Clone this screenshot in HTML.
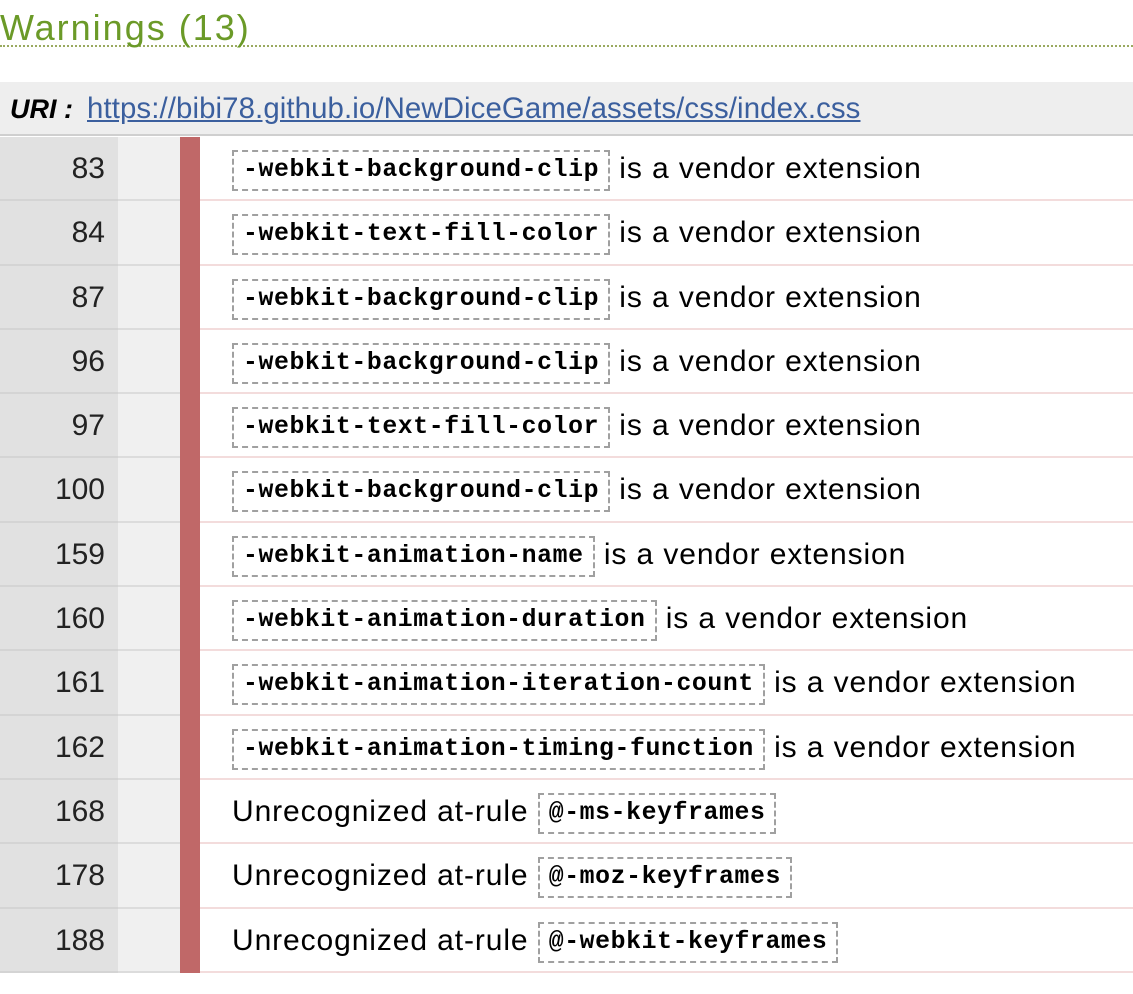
<!DOCTYPE html>
<html><head><meta charset="utf-8"><style>
body{margin:0;background:#fff;font-family:"Liberation Sans",Arial,sans-serif;width:1133px;height:994px;overflow:hidden;position:relative}
h2{position:absolute;left:0;top:0;margin:0;width:1133px;height:45px;border-bottom:2px dotted #9aaa60;color:#6b9a28;font-weight:normal;font-size:36px;letter-spacing:2px;line-height:58px;white-space:nowrap}
h2 span{position:relative;top:-1px}
.uri{position:absolute;left:0;top:82px;width:1133px;height:54px;background:#eeeeee;border-bottom:2px solid #cfcfcf;font-size:29.4px;line-height:54px;padding-left:10px;box-sizing:border-box;white-space:nowrap}
.uri b{font-style:italic;font-weight:900;margin-right:14px;font-size:27px}
.uri a{color:#3b5f9e;text-decoration:underline;letter-spacing:0.1px}
.rows{position:absolute;left:0;top:137px;width:1133px}
.row{position:relative;height:64.3px;box-sizing:border-box}
.n{position:absolute;left:0;top:0;width:118px;height:100%;background:#e1e1e1;border-bottom:2px solid #d4d4d4;box-sizing:border-box;text-align:right;padding-right:13px;font-size:30px;line-height:64px;color:#222}
.g{position:absolute;left:118px;top:0;width:62px;height:100%;background:#f0f0f0;border-bottom:2px solid #dcdcdc;box-sizing:border-box}
.r{position:absolute;left:180px;top:0;width:20px;height:100%;background:#c06868}
.c{position:absolute;left:200px;top:0;right:0;height:100%;border-bottom:2px solid #f3dcdc;box-sizing:border-box;padding-left:32px;font-size:30px;letter-spacing:0.9px;line-height:64px;white-space:nowrap;color:#000}
code{display:inline-block;font-family:"Liberation Mono","Courier New",monospace;font-weight:bold;font-size:24.8px;line-height:37px;border:2px dashed #a0a0a0;padding:0 9px;vertical-align:2px;letter-spacing:0.6px}
</style></head><body>
<h2><span>Warnings (13)</span></h2>
<div class="uri"><b>URI :</b><a>https://bibi78.github.io/NewDiceGame/assets/css/index.css</a></div>
<div class="rows">
<div class="row"><div class="n">83</div><div class="g"></div><div class="r"></div><div class="c"><code>-webkit-background-clip</code> is a vendor extension</div></div>
<div class="row"><div class="n">84</div><div class="g"></div><div class="r"></div><div class="c"><code>-webkit-text-fill-color</code> is a vendor extension</div></div>
<div class="row"><div class="n">87</div><div class="g"></div><div class="r"></div><div class="c"><code>-webkit-background-clip</code> is a vendor extension</div></div>
<div class="row"><div class="n">96</div><div class="g"></div><div class="r"></div><div class="c"><code>-webkit-background-clip</code> is a vendor extension</div></div>
<div class="row"><div class="n">97</div><div class="g"></div><div class="r"></div><div class="c"><code>-webkit-text-fill-color</code> is a vendor extension</div></div>
<div class="row"><div class="n">100</div><div class="g"></div><div class="r"></div><div class="c"><code>-webkit-background-clip</code> is a vendor extension</div></div>
<div class="row"><div class="n">159</div><div class="g"></div><div class="r"></div><div class="c"><code>-webkit-animation-name</code> is a vendor extension</div></div>
<div class="row"><div class="n">160</div><div class="g"></div><div class="r"></div><div class="c"><code>-webkit-animation-duration</code> is a vendor extension</div></div>
<div class="row"><div class="n">161</div><div class="g"></div><div class="r"></div><div class="c"><code>-webkit-animation-iteration-count</code> is a vendor extension</div></div>
<div class="row"><div class="n">162</div><div class="g"></div><div class="r"></div><div class="c"><code>-webkit-animation-timing-function</code> is a vendor extension</div></div>
<div class="row"><div class="n">168</div><div class="g"></div><div class="r"></div><div class="c">Unrecognized at-rule <code>@-ms-keyframes</code></div></div>
<div class="row"><div class="n">178</div><div class="g"></div><div class="r"></div><div class="c">Unrecognized at-rule <code>@-moz-keyframes</code></div></div>
<div class="row"><div class="n">188</div><div class="g"></div><div class="r"></div><div class="c">Unrecognized at-rule <code>@-webkit-keyframes</code></div></div>
</div>
</body></html>
